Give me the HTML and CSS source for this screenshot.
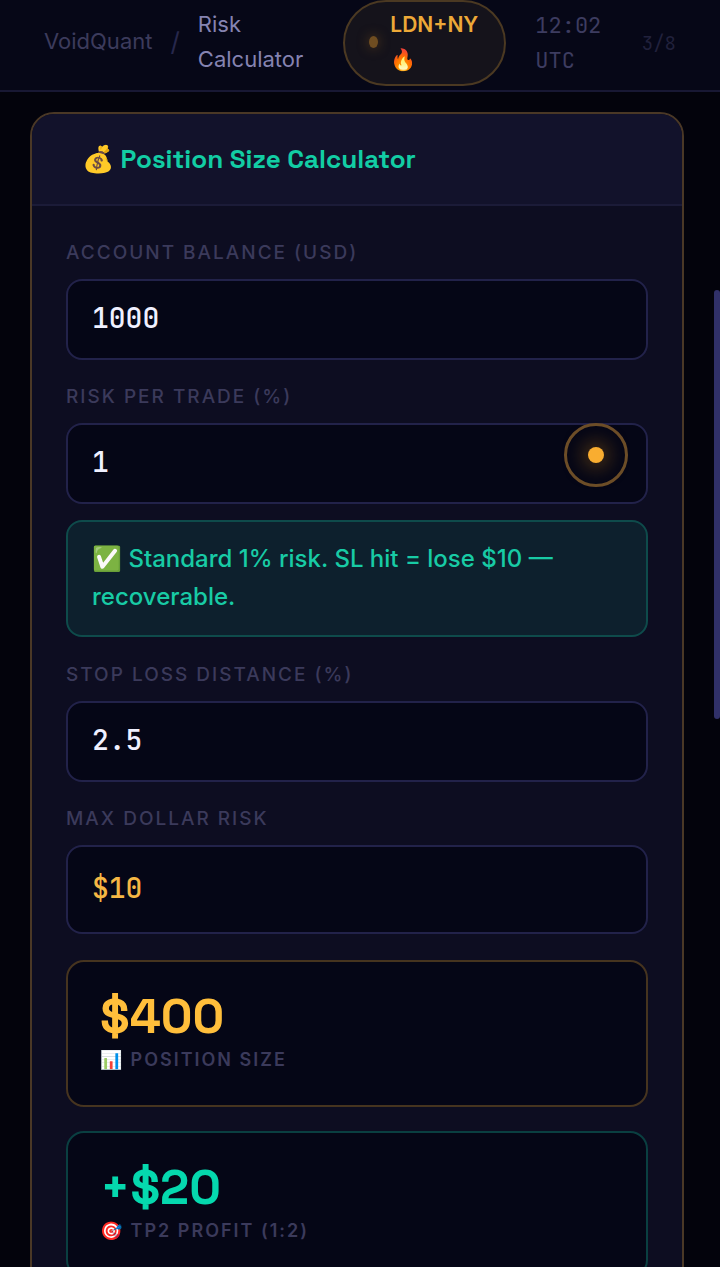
FILE: index.html
```html
<!DOCTYPE html>
<html lang="en">
<head>
<meta charset="utf-8">
<meta name="viewport" content="width=device-width, initial-scale=1">
<title>VoidQuant – Risk Calculator</title>
<link rel="stylesheet" href="styles.css">
</head>
<body>
<div class="app">
  <header class="topbar">
    <nav class="crumbs" aria-label="Breadcrumb">
      <span class="brand">VoidQuant</span>
      <span class="slash">/</span>
      <span class="current">Risk Calculator</span>
    </nav>
    <div class="session">
      <span class="session-dot"></span>
      <span class="session-name">LDN+NY 🔥</span>
    </div>
    <time class="clock">12:02 UTC</time>
    <span class="step">3/8</span>
  </header>

  <main class="content">
    <section class="card">
      <h1 class="card-title">💰 Position Size Calculator</h1>
      <form class="card-body">
        <div class="field">
          <label class="label" for="balance">ACCOUNT BALANCE (USD)</label>
          <input class="input" id="balance" type="text" inputmode="decimal" value="1000">
        </div>
        <div class="field">
          <label class="label" for="risk">RISK PER TRADE (%)</label>
          <div class="input-wrap">
            <input class="input" id="risk" type="text" inputmode="decimal" value="1">
            <span class="pointer"></span>
          </div>
        </div>
        <p class="notice">✅ Standard 1% risk. SL hit = lose $10 — recoverable.</p>
        <div class="field">
          <label class="label" for="stop">STOP LOSS DISTANCE (%)</label>
          <input class="input" id="stop" type="text" inputmode="decimal" value="2.5">
        </div>
        <div class="field">
          <label class="label" for="max">MAX DOLLAR RISK</label>
          <output class="input input-result" id="max">$10</output>
        </div>
        <div class="results">
          <div class="result result-gold">
            <div class="value">$400</div>
            <div class="caption">📊 POSITION SIZE</div>
          </div>
          <div class="result result-green">
            <div class="value">+$20</div>
            <div class="caption">🎯 TP2 PROFIT (1:2)</div>
          </div>
        </div>
      </form>
    </section>
  </main>
  <div class="scroll-thumb"></div>
</div>
</body>
</html>
```

FILE: styles.css
```css
* {
  box-sizing: border-box;
}

body {
  margin: 0;
  background: #03030c;
  color: #f0f0ff;
  font-family: "Inter", sans-serif;
}

.app {
  position: relative;
  display: flex;
  flex-direction: column;
  height: 100vh;
  overflow: hidden;
}

.topbar {
  flex: none;
  display: flex;
  align-items: center;
  padding: 0 44px 4px;
  border-bottom: 2px solid #181834;
  background: #060717;
  font-size: 22px;
  line-height: 35px;
}

.crumbs {
  display: flex;
  align-items: center;
  gap: 18px;
  padding-bottom: 3px;
}

.brand {
  color: #3c3b5c;
}

.slash {
  color: #27274c;
  font-size: 26px;
}

.current {
  width: min-content;
  color: #8583b1;
}

.session {
  display: flex;
  align-items: center;
  gap: 12px;
  margin-left: 40px;
  padding: 5px 26px 7px 24px;
  border: 2px solid #4b3922;
  border-radius: 44px;
  background: #15131b;
  color: #eda938;
  font-size: 21px;
  font-weight: 600;
}

.session-dot {
  width: 9px;
  height: 12px;
  border-radius: 50%;
  background: #6f4d21;
  box-shadow: 0 0 12px #5a3d1c;
}

.session-name {
  width: min-content;
}

.clock {
  width: min-content;
  margin-left: 29px;
  padding-bottom: 1px;
  color: #3d3c60;
  font-family: "JetBrains Mono", "DejaVu Sans Mono", monospace;
}

.step {
  margin-left: auto;
  color: #21213c;
  font-family: "JetBrains Mono", "DejaVu Sans Mono", monospace;
  font-size: 19px;
}

.content {
  flex: 1;
  min-height: 0;
  overflow: hidden;
  padding: 20px 36px 0 30px;
}

.card {
  border: 2px solid #4a3826;
  border-radius: 24px;
  background: #0d0d21;
  overflow: hidden;
}

.card-title {
  margin: 0;
  padding: 25px 50px;
  border-bottom: 2px solid #1b1b38;
  background: #12122b;
  color: #12cda4;
  font-family: "Space Grotesk", "Inter", sans-serif;
  font-size: 26px;
  font-weight: 600;
  line-height: 40px;
}

.card-body {
  padding: 33px 34px;
}

.field {
  display: flex;
  flex-direction: column;
  gap: 12px;
}

.field + .field {
  margin-top: 23px;
}

.label,
.caption {
  color: #3b3a5b;
  letter-spacing: 2px;
  line-height: 28px;
}

.label {
  font-size: 19px;
  font-weight: 500;
}

.caption {
  font-size: 18px;
  font-weight: 600;
}

.input-wrap {
  position: relative;
}

.input {
  display: block;
  width: 100%;
  height: 81px;
  padding: 0 24px 4px;
  border: 2px solid #22224a;
  border-radius: 16px;
  background: #050616;
  color: #f0f0ff;
  font-family: "JetBrains Mono", "DejaVu Sans Mono", monospace;
  font-size: 28px;
  font-weight: 500;
  outline: none;
}

.input-result {
  height: auto;
  padding: 18px 24px 22px;
  color: #f5b744;
  line-height: 45px;
}

.pointer {
  position: absolute;
  top: 0;
  right: 20px;
  display: grid;
  place-items: center;
  width: 64px;
  height: 64px;
  border: 3px solid #6d4e28;
  border-radius: 50%;
}

.pointer::before {
  content: "";
  width: 16px;
  height: 16px;
  border-radius: 50%;
  background: #f9ad30;
  box-shadow: 0 0 20px 4px #5a3c14;
}

.notice {
  margin: 16px 0 24px;
  padding: 18px 24px 19px;
  border: 2px solid #0e4b4b;
  border-radius: 16px;
  background: #0d202d;
  color: #18cba5;
  font-size: 24px;
  font-weight: 500;
  line-height: 38px;
}

.results {
  display: grid;
  gap: 24px;
  margin-top: 26px;
}

.result {
  padding: 24px 32px 31px;
  border: 2px solid;
  border-radius: 18px;
  background: #050616;
}

.result-gold {
  border-color: #46341f;
}

.result-green {
  border-color: #0a3f41;
}

.value {
  font-family: "Space Grotesk", "Inter", sans-serif;
  font-size: 49px;
  font-weight: 700;
  line-height: 60px;
}

.result-gold .value {
  color: #ffbe3b;
}

.result-green .value {
  color: #05d8ae;
}

.scroll-thumb {
  position: absolute;
  top: 290px;
  right: 0;
  width: 6px;
  height: 429px;
  border-radius: 3px;
  background: #303069;
}
```
